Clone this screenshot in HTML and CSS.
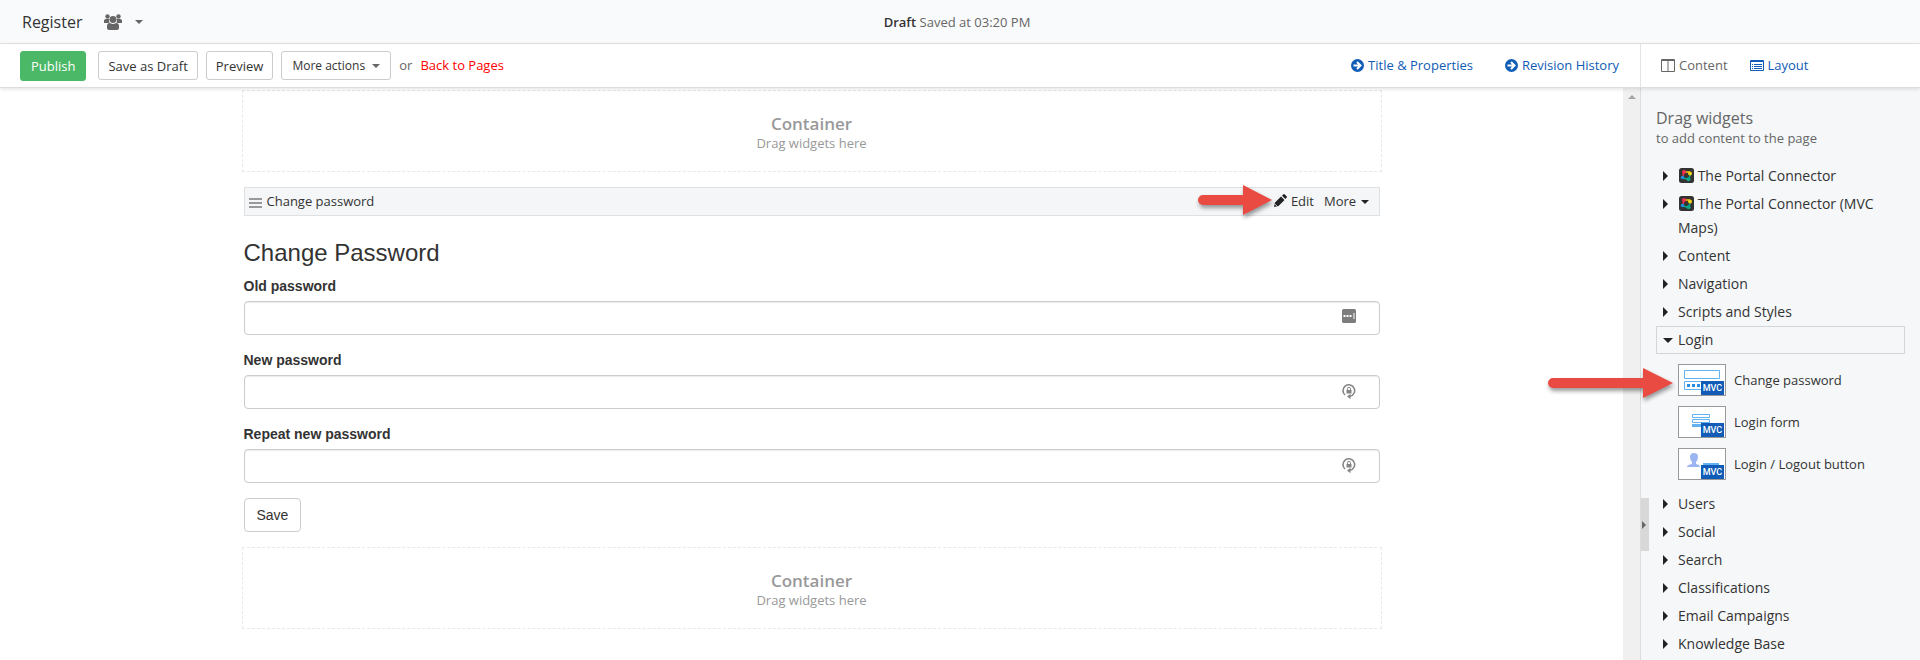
FILE: index.html
```html
<!DOCTYPE html>
<html lang="en">
<head>
    <meta charset="UTF-8">
    <meta name="viewport" content="width=device-width, initial-scale=1.0">
    <title>Register</title>
    <link rel="stylesheet" href="styles.css">
</head>
<body>
    <!-- Shared icons -->
    <svg class="sprite" aria-hidden="true">
        <symbol id="arrow-circle" viewBox="0 0 13 13">
            <circle cx="6.5" cy="6.5" r="6.5" fill="#105cb6"/>
            <path d="M2.5 6.5h6M6 3l3.5 3.5L6 10" fill="none" stroke="#fff" stroke-width="2"/>
        </symbol>
        <symbol id="portal" viewBox="0 0 15 15">
            <rect width="15" height="15" rx="2.5" fill="#333"/>
            <path d="M5 4L3.500 9.500" stroke="#f0304c" stroke-width="1.500"/>
            <path d="M5 4h6" stroke="#f7c600" stroke-width="1.500"/>
            <path d="M11.500 5.500l-1.500 5" stroke="#0aa78a" stroke-width="1.500"/>
            <path d="M4 10l6 1.500" stroke="#0aa78a" stroke-width="1.500"/>
            <circle cx="5" cy="4" r="2" fill="#f0304c"/>
            <circle cx="11" cy="5.500" r="2" fill="#f7d117"/>
            <circle cx="3.500" cy="9.500" r="1.800" fill="#1c8ee0"/>
            <circle cx="9.500" cy="11.300" r="2" fill="#0aa78a"/>
        </symbol>
        <symbol id="lock-cycle" viewBox="0 0 14 17">
            <path d="M3 12A5.800 5.800 0 1 1 8 13.300" fill="none" stroke="#858585" stroke-width="1.600"/>
            <path d="M8.500 10.800v5.400L5 13.500z" fill="#858585"/>
            <rect x="4.500" y="7" width="5" height="3.500" fill="#858585"/>
            <path d="M5.500 7V5.800a1.500 1.500 0 0 1 3 0V7" fill="none" stroke="#858585"/>
        </symbol>
    </svg>

    <header class="page-header">
        <div class="page-name">
            <h1>Register</h1>
            <button type="button" class="audience" aria-label="Audience">
                <svg width="18" height="16" viewBox="0 0 18 16" fill="#666">
                    <circle cx="3.500" cy="2.500" r="2.200"/>
                    <circle cx="14.500" cy="2.500" r="2.200"/>
                    <path d="M0 9V6.500Q0 5 2 5h3.500Q4.500 7 5.500 9z"/>
                    <path d="M18 9V6.500Q18 5 16 5h-3.500q1 2 0 4z"/>
                    <circle cx="9" cy="5.500" r="3.400"/>
                    <path d="M3 14v-2q0-3 3-3 3 2 6 0 3 0 3 3v2q0 2-2 2H5q-2 0-2-2z"/>
                </svg>
                <span class="caret"></span>
            </button>
        </div>
        <p class="status"><strong>Draft</strong> Saved at 03:20 PM</p>
    </header>

    <div class="toolbar">
        <div class="actions">
            <button type="button" class="btn btn-publish">Publish</button>
            <button type="button" class="btn">Save as Draft</button>
            <button type="button" class="btn">Preview</button>
            <button type="button" class="btn btn-menu">More actions <span class="caret"></span></button>
            <span class="or">or</span>
            <a href="#" class="back">Back to Pages</a>
        </div>
        <nav class="page-links">
            <a href="#"><svg width="13" height="13"><use href="#arrow-circle"/></svg>Title &amp; Properties</a>
            <a href="#"><svg width="13" height="13"><use href="#arrow-circle"/></svg>Revision History</a>
        </nav>
        <nav class="modes">
            <a href="#" class="current">
                <svg width="14" height="13" viewBox="0 0 14 13" fill="none" stroke="#666">
                    <path d="M.5.500h13v12H.5zM7 2v10.500M0 1.500h14"/>
                </svg>Content</a>
            <a href="#">
                <svg width="14" height="11" viewBox="0 0 14 11" fill="none" stroke="#105cb6">
                    <path d="M.5.500h13v10H.5zM0 1.500h14M2 4.500h1M4 4.500h8M2 6.500h1M4 6.500h8M2 8.500h1M4 8.500h8"/>
                </svg>Layout</a>
        </nav>
    </div>

    <div class="workspace">
        <main class="canvas">
            <div class="zone">
                <section class="container-box">
                    <h2>Container</h2>
                    <p>Drag widgets here</p>
                </section>

                <section class="widget">
                    <div class="widget-bar">
                        <span class="grip"></span>
                        <span class="widget-title">Change password</span>
                        <a href="#" class="edit">
                            <svg class="pointer pointer-edit" width="80" height="40" viewBox="0 0 80 40">
                                <path d="M9 15h40V5l29 15-29 15V25H9a5 5 0 0 1 0-10z" fill="#e94b43"/>
                            </svg>
                            <svg width="13" height="13" viewBox="0 0 13 13" fill="#222">
                                <path d="M0 13l1-4.500 6-6L10.500 6l-6 6zM8 1.700L9.500.2q.5-.4 1 0l2.300 2.300q.4.500 0 1L11.300 5z"/>
                                <path d="M1.200 10.300l1.500 1.500" stroke="#fff"/>
                            </svg>Edit</a>
                        <a href="#">More <span class="caret caret-dark"></span></a>
                    </div>

                    <form class="password-form">
                        <h3>Change Password</h3>
                        <div class="field">
                            <label for="old">Old password</label>
                            <input type="password" id="old">
                            <svg class="field-icon" width="14" height="14" viewBox="0 0 14 14">
                                <rect width="14" height="14" rx="1.500" fill="#7d7d7d"/>
                                <path d="M1.500 6h2v2h-2zM4.500 6h2v2h-2zM7.500 6h2v2h-2zM11.500 4h1v6h-1z" fill="#fff"/>
                            </svg>
                        </div>
                        <div class="field">
                            <label for="new">New password</label>
                            <input type="password" id="new">
                            <svg class="field-icon" width="14" height="17"><use href="#lock-cycle"/></svg>
                        </div>
                        <div class="field">
                            <label for="repeat">Repeat new password</label>
                            <input type="password" id="repeat">
                            <svg class="field-icon" width="14" height="17"><use href="#lock-cycle"/></svg>
                        </div>
                        <button type="button" class="save">Save</button>
                    </form>
                </section>

                <section class="container-box">
                    <h2>Container</h2>
                    <p>Drag widgets here</p>
                </section>
            </div>
        </main>

        <div class="scroll-track"><span></span></div>

        <aside class="sidebar">
            <button type="button" class="collapse" aria-label="Collapse"></button>
            <h2>Drag widgets</h2>
            <p class="hint">to add content to the page</p>

            <ul class="toolbox">
                <li><a href="#"><svg width="15" height="15"><use href="#portal"/></svg> The Portal Connector</a></li>
                <li><a href="#"><svg width="15" height="15"><use href="#portal"/></svg> The Portal Connector (MVC Maps)</a></li>
                <li><a href="#">Content</a></li>
                <li><a href="#">Navigation</a></li>
                <li><a href="#">Scripts and Styles</a></li>
                <li>
                    <a href="#" class="open">Login</a>
                    <ul class="widgets">
                        <li>
                            <span class="thumb">
                                <svg width="46" height="30" viewBox="0 0 46 30" fill="none" stroke="#62b1f0">
                                    <path d="M5.500 5.500h35v8h-35zM5.500 16.500h35v8h-35z"/>
                                    <path d="M8 19h3v3H8zM13 19h3v3h-3zM18 19h3v3h-3z" fill="#2d8fe0" stroke="none"/>
                                </svg>
                                <b>MVC</b>
                            </span>
                            Change password
                            <svg class="pointer pointer-widget" width="134" height="40" viewBox="0 0 134 40">
                                <path d="M9 15h90V5l30 15-30 15V25H9a5 5 0 0 1 0-10z" fill="#e94b43"/>
                            </svg>
                        </li>
                        <li>
                            <span class="thumb">
                                <svg width="46" height="30" viewBox="0 0 46 30" fill="none" stroke="#62b1f0">
                                    <path d="M13.500 7.500h17v3h-17zM13.500 12.500h17v3h-17z"/>
                                    <path d="M13 17h9v3h-9z" fill="#62b1f0" stroke="none"/>
                                </svg>
                                <b>MVC</b>
                            </span>
                            Login form
                        </li>
                        <li>
                            <span class="thumb">
                                <svg width="46" height="30" viewBox="0 0 46 30">
                                    <path d="M8 18q0-2 5-3v-2q-2-2-2-5 0-4 4-4t4 4q0 3-2 5v2q4 1 4 3z" fill="#9db4f2"/>
                                    <path d="M24 14h16v3H24z" fill="#62b1f0"/>
                                </svg>
                                <b>MVC</b>
                            </span>
                            Login / Logout button
                        </li>
                    </ul>
                </li>
                <li><a href="#">Users</a></li>
                <li><a href="#">Social</a></li>
                <li><a href="#">Search</a></li>
                <li><a href="#">Classifications</a></li>
                <li><a href="#">Email Campaigns</a></li>
                <li><a href="#">Knowledge Base</a></li>
            </ul>
        </aside>
    </div>
</body>
</html>
```
FILE: styles.css
```css
/* Reset */
* {
    margin: 0;
    padding: 0;
    box-sizing: border-box;
}

/* Variables */
:root {
    --text: #333;
    --muted: #666;
    --link: #105cb6;
    --line: #e4e4e4;
    --panel: #f5f7f9;
    --sidebar-width: 280px;
}

/* Global */
body {
    height: 100vh;
    display: flex;
    flex-direction: column;
    overflow: hidden;
    font: 13px/20px "Open Sans", sans-serif;
    color: var(--text);
    background: #fff;
}

a {
    color: var(--link);
    text-decoration: none;
}

ul {
    list-style: none;
}

button {
    font: inherit;
    color: inherit;
    background: none;
    border: 0;
    cursor: pointer;
}

.sprite {
    position: absolute;
    width: 0;
    height: 0;
}

.caret {
    display: inline-block;
    border: 4px solid transparent;
    border-top-color: var(--muted);
    border-bottom: 0;
    vertical-align: middle;
}

.caret-dark {
    margin-left: 1px;
    border-top-color: #222;
}

/* Header */
.page-header {
    display: grid;
    grid-template-columns: 1fr auto 1fr;
    align-items: center;
    height: 44px;
    padding: 0 28px 0 22px;
    background: #f9fafc;
    border-bottom: 1px solid var(--line);
    box-shadow: 0 1px 1px rgba(0, 0, 0, 0.06);
}

.page-name,
.audience {
    display: flex;
    align-items: center;
}

.page-name {
    gap: 22px;
}

.page-name h1 {
    font-size: 16px;
    font-weight: 400;
}

.audience {
    gap: 13px;
}

.status {
    color: var(--muted);
}

.status strong {
    color: var(--text);
    font-weight: 600;
}

/* Toolbar */
.toolbar {
    position: relative;
    z-index: 1;
    display: flex;
    align-items: stretch;
    height: 44px;
    background: #fff;
    border-bottom: 1px solid #ddd;
    box-shadow: 0 1px 4px rgba(0, 0, 0, 0.12);
}

.actions {
    display: flex;
    align-items: center;
    gap: 8px;
    padding-left: 20px;
}

.btn {
    height: 29px;
    padding: 0 9px;
    border: 1px solid #ccc;
    border-radius: 3px;
}

.btn-menu {
    padding: 0 10px;
    font-size: 12px;
}

.btn .caret {
    margin-left: 4px;
}

.btn-publish {
    height: 30px;
    padding: 0 10px;
    margin-right: 4px;
    color: #fff;
    background: #4ab866;
    border-color: #4ab866;
}

.or,
.back,
.page-links,
.modes {
    padding-bottom: 2px;
}

.or {
    color: var(--muted);
}

.back {
    color: #f00;
}

.page-links,
.modes {
    display: flex;
    align-items: center;
}

.page-links {
    gap: 32px;
    margin-left: auto;
    padding-right: 21px;
}

.page-links a,
.modes a {
    display: flex;
    align-items: center;
    gap: 4px;
}

.page-links svg,
.modes svg {
    margin-top: 2px;
}

.modes {
    gap: 22px;
    width: var(--sidebar-width);
    padding-left: 20px;
    border-left: 1px solid var(--line);
}

.modes .current {
    color: var(--muted);
}

/* Workspace */
.workspace {
    flex: 1;
    display: flex;
    min-height: 0;
}

.canvas {
    flex: 1;
    overflow: hidden;
}

.zone {
    max-width: 1140px;
    margin: 2px auto 0;
}

.container-box {
    padding: 23px 0 18px;
    border: 1px dashed #e8e8e8;
    color: #999;
    text-align: center;
}

.container-box h2 {
    font-size: 17px;
    font-weight: 600;
    line-height: 20px;
}

.container-box p {
    line-height: 19px;
}

/* Widget */
.widget {
    padding: 15px 2px;
}

.widget-bar {
    display: flex;
    align-items: center;
    gap: 10px;
    height: 29px;
    padding: 0 10px 2px 4px;
    background: #f4f6f8;
    border: 1px solid #dfe1e3;
}

.widget-bar a {
    color: var(--text);
}

.grip {
    width: 13px;
    height: 10px;
    margin: 4px -5px 0 0;
    border-top: 2px solid #999;
    border-bottom: 2px solid #999;
    background: linear-gradient(#999, #999) center / 100% 2px no-repeat;
}

.widget-title {
    flex: 1;
    font-weight: 500;
}

.edit {
    position: relative;
    display: flex;
    align-items: center;
    gap: 4px;
}

/* Red callout arrows lie over the page */
.pointer {
    position: absolute;
    filter: drop-shadow(1px 3px 2px rgba(0, 0, 0, 0.4));
}

.pointer-edit {
    right: 100%;
    top: -11px;
}

.pointer-widget {
    right: 100%;
    top: -1px;
}

/* Password form */
.password-form {
    padding-top: 24px;
    font: 14px/20px "Liberation Sans", Arial, sans-serif;
}

.password-form h3 {
    margin-bottom: 10px;
    font-size: 24px;
    font-weight: 400;
    line-height: 26px;
}

.field {
    position: relative;
    margin-bottom: 15px;
}

.field label {
    display: block;
    margin-bottom: 5px;
    font-weight: 700;
}

.field input {
    display: block;
    width: 100%;
    height: 34px;
    padding: 6px 48px 6px 12px;
    font: inherit;
    border: 1px solid #ccc;
    border-radius: 4px;
    box-shadow: inset 0 1px 1px rgba(0, 0, 0, 0.08);
}

.field-icon {
    position: absolute;
    right: 24px;
    top: 33px;
}

.save {
    display: block;
    height: 34px;
    padding: 0 12px;
    border: 1px solid #ccc;
    border-radius: 4px;
}

/* Scroll track */
.scroll-track {
    width: 17px;
    padding-top: 7px;
    background: #f0f0f0;
}

.scroll-track span {
    display: block;
    width: 8px;
    margin: 0 auto;
    border: 4px solid transparent;
    border-bottom-color: #a3a3a3;
    border-top: 0;
}

/* Sidebar */
.sidebar {
    position: relative;
    width: var(--sidebar-width);
    padding: 20px 15px 0;
    background: var(--panel);
    border-left: 1px solid #ddd;
}

.sidebar h2 {
    font-size: 16px;
    font-weight: 400;
    line-height: 20px;
    color: var(--muted);
}

.hint {
    margin-bottom: 14px;
    color: var(--muted);
}

.toolbox a {
    position: relative;
    display: block;
    padding: 1px 20px 1px 21px;
    font-size: 14px;
    line-height: 24px;
    color: var(--text);
    border: 1px solid transparent;
}

.toolbox a::before {
    content: '';
    position: absolute;
    left: 6px;
    top: 8px;
    border: 5px solid transparent;
    border-left-color: #222;
    border-right: 0;
}

.toolbox a svg {
    margin-left: 1px;
    vertical-align: -2px;
}

.toolbox a.open {
    border-color: #d3d6d9;
}

.toolbox a.open::before {
    top: 11px;
    border: 5px solid transparent;
    border-top-color: #222;
    border-bottom: 0;
}

.widgets {
    padding: 10px 0 0 22px;
}

.widgets li {
    position: relative;
    display: flex;
    align-items: center;
    gap: 8px;
    margin-bottom: 10px;
}

.thumb {
    position: relative;
    width: 48px;
    height: 32px;
    background: #fff;
    border: 1px solid #999;
}

.thumb svg {
    display: block;
}

.thumb b {
    position: absolute;
    right: 1px;
    bottom: 0;
    width: 23px;
    font: 500 9px/14px Roboto, sans-serif;
    color: #fff;
    text-align: center;
    background: var(--link);
}

.collapse {
    position: absolute;
    left: 0;
    top: 410px;
    width: 8px;
    height: 53px;
    background: #d8d8d8;
}

.collapse::before {
    content: '';
    display: block;
    width: 0;
    margin-left: 1px;
    border: 4px solid transparent;
    border-left-color: var(--muted);
    border-right: 0;
}
```
